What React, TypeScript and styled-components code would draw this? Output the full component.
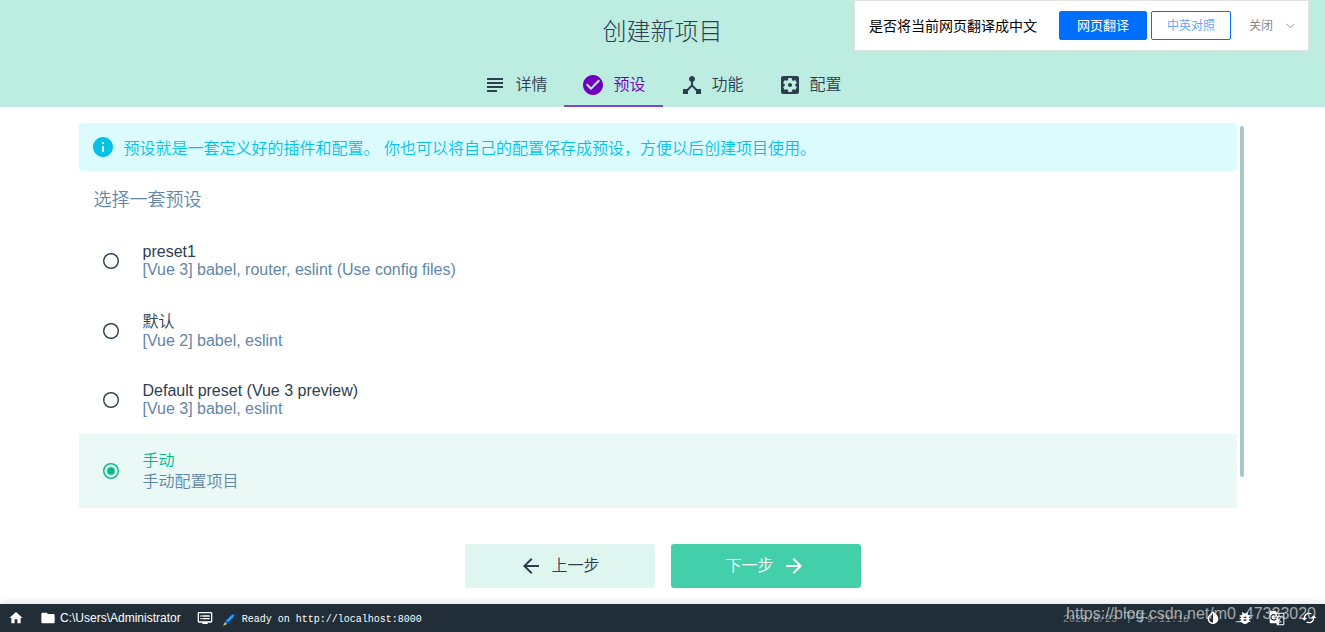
import React, { useState } from 'react';
import styled, { createGlobalStyle, css } from 'styled-components';
import {
  MdSubject, MdCheckCircle, MdDeviceHub, MdSettingsApplications, MdInfo, MdArrowBack,
  MdArrowForward, MdHome, MdFolder, MdDvr, MdInvertColors, MdBugReport, MdGTranslate, MdCached,
} from 'react-icons/md';

const dark = '#2c3e50';
const muted = '#6287a8';
const green = '#00b98b';

const GlobalStyle = createGlobalStyle`
  * { box-sizing: border-box; }
  body {
    margin: 0;
    color: ${dark};
    background: #fff;
    font: 350 16px/20px "Liberation Sans", "Noto Sans CJK SC", sans-serif;
  }
  button, input { font: inherit; margin: 0; }
  button { cursor: pointer; }
`;

const Page = styled.div`
  position: relative;
  display: flex;
  flex-direction: column;
  min-height: 100vh;
`;

const Header = styled.header`
  display: flex;
  flex-direction: column;
  align-items: center;
  background: #bdede0;
`;

const Title = styled.h1`
  margin: 0;
  padding-top: 1px;
  font-size: 24px;
  font-weight: 300;
  line-height: 62px;
`;

const Tabs = styled.nav`
  display: flex;
`;

const Tab = styled.button<{ $active?: boolean }>`
  display: flex;
  align-items: center;
  gap: 8px;
  height: 44px;
  padding: 2px 17px 0;
  border: 0;
  border-bottom: 2px solid ${p => (p.$active ? '#8745cf' : 'transparent')};
  background: none;
  color: ${p => (p.$active ? '#6f00bd' : dark)};
  svg { width: 24px; height: 24px; }
`;

const TranslateBar = styled.aside`
  position: absolute;
  top: 0;
  right: 16px;
  display: flex;
  align-items: center;
  height: 51px;
  padding: 0 13px 0 14px;
  border: 1px solid #e2e2e2;
  background: #fff;
  color: #000;
  font-size: 14px;
  font-weight: 400;
`;

const TranslateButton = styled.button<{ $primary?: boolean }>`
  width: ${p => (p.$primary ? 88 : 80)}px;
  height: 29px;
  margin-left: ${p => (p.$primary ? 22 : 4)}px;
  padding: 0;
  border: 1px solid #006eff;
  border-radius: 2px;
  background: ${p => (p.$primary ? '#006eff' : '#fff')};
  color: ${p => (p.$primary ? '#fff' : '#66a8f5')};
  font-size: ${p => (p.$primary ? 13 : 12)}px;
`;

const CloseButton = styled.button`
  display: flex;
  align-items: center;
  gap: 13px;
  margin-left: 18px;
  padding: 0;
  border: 0;
  background: none;
  color: #888;
  font-size: 12px;
`;

const Main = styled.main`
  display: flex;
  flex: 1;
  width: 100%;
  max-width: 1200px;
  margin: 0 auto;
  padding: 16px 16px 0;
`;

const Content = styled.div`
  flex: 1;
`;

const ScrollTrack = styled.div`
  width: 10px;
  padding: 3px;
`;

const ScrollThumb = styled.div`
  height: 88%;
  border-radius: 2px;
  background: #aac6cf;
`;

const Info = styled.p`
  display: flex;
  align-items: center;
  gap: 9px;
  min-height: 48px;
  margin: 0;
  padding: 0 12px;
  border-radius: 3px;
  background: #dbfbff;
  color: #03c2e6;
  svg { width: 24px; height: 24px; flex: none; }
`;

const InfoText = styled.span`
  padding-top: 3px;
`;

const Presets = styled.fieldset`
  min-width: 0;
  margin: 0;
  padding: 0;
  border: 0;
`;

const PresetsTitle = styled.legend`
  padding: 2px 15px 0;
  color: ${muted};
  font-size: 18px;
  line-height: 54px;
`;

const Item = styled.label<{ $selected: boolean }>`
  display: flex;
  align-items: center;
  gap: 24px;
  padding: 16px 24px;
  background: ${p => (p.$selected ? '#eaf9f6' : 'transparent')};
  cursor: pointer;
`;

const Radio = styled.input`
  appearance: none;
  width: 16px;
  height: 16px;
  border-radius: 50%;
  background: radial-gradient(circle at center, transparent 6px, ${dark} 7px);
  &:checked {
    background: radial-gradient(circle at center, ${green} 3px, transparent 5px, transparent 6px, ${green} 7px);
  }
`;

const line = css<{ $cjk: boolean }>`
  line-height: ${p => (p.$cjk ? 21 : 18)}px;
`;

const ItemText = styled.span`
  display: flex;
  flex-direction: column;
`;

const ItemName = styled.span<{ $cjk: boolean; $selected: boolean }>`
  ${line}
  color: ${p => (p.$selected ? green : dark)};
`;

const ItemDescription = styled.span<{ $cjk: boolean }>`
  ${line}
  color: ${muted};
`;

const Actions = styled.div`
  display: flex;
  justify-content: center;
  gap: 16px;
  padding: 16px;
`;

const ActionButton = styled.button<{ $primary?: boolean }>`
  display: flex;
  align-items: center;
  justify-content: center;
  gap: 8px;
  width: 190px;
  height: 44px;
  border: 0;
  border-radius: 3px;
  background: ${p => (p.$primary ? '#42cfa9' : '#dff6f0')};
  color: ${p => (p.$primary ? '#fff' : dark)};
  svg { width: 24px; height: 24px; }
`;

const StatusBar = styled.footer`
  position: relative;
  display: flex;
  align-items: center;
  height: 28px;
  padding: 0 8px;
  background: #212d37;
  box-shadow: 0 -2px 8px rgba(0, 0, 0, 0.1);
  color: #fff;
  font-size: 12px;
  font-weight: 400;
`;

const StatusButton = styled.button`
  display: flex;
  align-items: center;
  gap: 4px;
  padding: 0;
  border: 0;
  background: none;
  color: inherit;
  svg { width: 16px; height: 16px; }
`;

const StatusLeft = styled.div`
  display: flex;
  align-items: center;
  gap: 16px;
  flex: 1;
`;

const StatusRight = styled.div`
  display: flex;
  align-items: center;
  gap: 16px;
`;

const Log = styled.span`
  display: flex;
  align-items: center;
  gap: 6px;
  margin-left: -7px;
  padding-top: 3px;
  font-family: "Liberation Mono", "Noto Sans CJK SC", monospace;
  font-size: 10px;
`;

const Clock = styled.time`
  padding-top: 3px;
  color: #7f878d;
  font-family: "Liberation Mono", "Noto Sans CJK SC", monospace;
  font-size: 10px;
`;

const Meridiem = styled.span`
  font-size: 12px;
`;

const Watermark = styled.span`
  position: absolute;
  right: 9px;
  top: 0;
  color: rgba(255, 255, 255, 0.6);
  font-size: 16px;
  pointer-events: none;
`;

const Pencil = () => (
  <svg width="14" height="14" viewBox="0 0 14 14" aria-hidden="true">
    <path d="M1 13 L3 8 L10 1 L13 1 L12 5 L6 11 Z" fill="#0a4f9c" />
    <path d="M4 8 L10 2 L12 2 L11 4 L6 9 Z" fill="#39a5f3" />
    <path d="M1 13 L3 9 L5 11 Z" fill="#f2c14a" />
  </svg>
);

const Chevron = () => (
  <svg width="9" height="6" viewBox="0 0 9 6" fill="none" stroke="#999" aria-hidden="true">
    <path d="M.5 .8 4.5 4.8 8.5 .8" />
  </svg>
);

const tabs = [
  { label: '详情', Icon: MdSubject },
  { label: '预设', Icon: MdCheckCircle },
  { label: '功能', Icon: MdDeviceHub },
  { label: '配置', Icon: MdSettingsApplications },
];

const presets = [
  { name: 'preset1', description: '[Vue 3] babel, router, eslint (Use config files)' },
  { name: '默认', description: '[Vue 2] babel, eslint' },
  { name: 'Default preset (Vue 3 preview)', description: '[Vue 3] babel, eslint' },
  { name: '手动', description: '手动配置项目' },
];

const hasCjk = (text: string) => /[\u4e00-\u9fff]/.test(text);

export default function App() {
  const [selected, setSelected] = useState('手动');
  return (
    <>
      <GlobalStyle />
      <Page>
        <Header>
          <Title>创建新项目</Title>
          <Tabs>
            {tabs.map(({ label, Icon }) => (
              <Tab key={label} $active={label === '预设'}>
                <Icon />
                {label}
              </Tab>
            ))}
          </Tabs>
        </Header>
        <TranslateBar>
          是否将当前网页翻译成中文
          <TranslateButton $primary>网页翻译</TranslateButton>
          <TranslateButton>中英对照</TranslateButton>
          <CloseButton>
            关闭
            <Chevron />
          </CloseButton>
        </TranslateBar>
        <Main>
          <Content>
            <Info>
              <MdInfo />
              <InfoText>
                预设就是一套定义好的插件和配置。 你也可以将自己的配置保存成预设，方便以后创建项目使用。
              </InfoText>
            </Info>
            <Presets>
              <PresetsTitle>选择一套预设</PresetsTitle>
              {presets.map(({ name, description }) => (
                <Item key={name} $selected={name === selected}>
                  <Radio
                    type="radio"
                    name="preset"
                    checked={name === selected}
                    onChange={() => setSelected(name)}
                  />
                  <ItemText>
                    <ItemName $cjk={hasCjk(name)} $selected={name === selected}>{name}</ItemName>
                    <ItemDescription $cjk={hasCjk(description)}>{description}</ItemDescription>
                  </ItemText>
                </Item>
              ))}
            </Presets>
          </Content>
          <ScrollTrack>
            <ScrollThumb />
          </ScrollTrack>
        </Main>
        <Actions>
          <ActionButton>
            <MdArrowBack />
            上一步
          </ActionButton>
          <ActionButton $primary>
            下一步
            <MdArrowForward />
          </ActionButton>
        </Actions>
        <StatusBar>
          <StatusLeft>
            <StatusButton aria-label="Home"><MdHome /></StatusButton>
            <StatusButton><MdFolder />C:\Users\Administrator</StatusButton>
            <StatusButton aria-label="Logs"><MdDvr /></StatusButton>
            <Log><Pencil />Ready on http://localhost:8000</Log>
          </StatusLeft>
          <StatusRight>
            <Clock>2020/8/23 <Meridiem>下午</Meridiem>9:11:18</Clock>
            <StatusButton aria-label="Theme"><MdInvertColors /></StatusButton>
            <StatusButton aria-label="Report a bug"><MdBugReport /></StatusButton>
            <StatusButton aria-label="Translate"><MdGTranslate /></StatusButton>
            <StatusButton aria-label="Refresh"><MdCached /></StatusButton>
          </StatusRight>
          <Watermark>https://blog.csdn.net/m0_47333020</Watermark>
        </StatusBar>
      </Page>
    </>
  );
}
